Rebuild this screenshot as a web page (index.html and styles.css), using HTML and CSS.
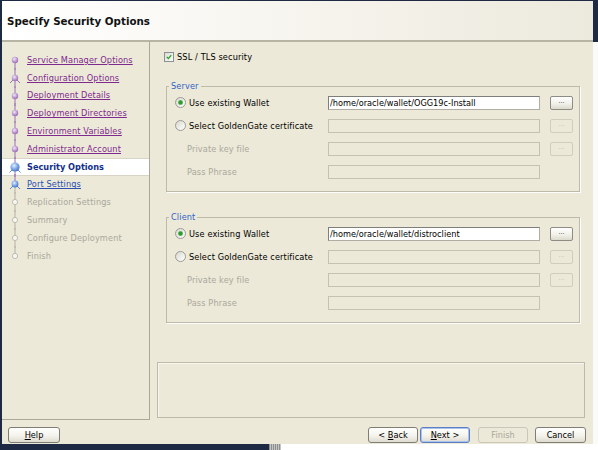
FILE: index.html
```html
<!DOCTYPE html>
<html lang="en">
<head>
  <meta charset="UTF-8">
  <title>Specify Security Options</title>
  <link rel="stylesheet" href="styles.css">
</head>
<body>
  <svg class="defs" width="0" height="0">
    <defs>
      <radialGradient id="gPurple" cx="0.4" cy="0.35" r="0.7">
        <stop offset="0" stop-color="#f1e8f6"/>
        <stop offset="0.5" stop-color="#c3a2d6"/>
        <stop offset="1" stop-color="#9466ad"/>
      </radialGradient>
      <radialGradient id="gBlue" cx="0.4" cy="0.35" r="0.7">
        <stop offset="0" stop-color="#e4eefc"/>
        <stop offset="0.5" stop-color="#86aee8"/>
        <stop offset="1" stop-color="#3b6cc4"/>
      </radialGradient>
    </defs>
  </svg>

  <div class="desk">
    <div class="window">
      <div class="header"><h1>Specify Security Options</h1></div>

      <div class="main">
        <nav class="steps">
          <div class="step visited">
            <svg class="ico" viewBox="0 0 25 18"><line class="ln-p" x1="13" y1="9" x2="13" y2="19"/><circle cx="13" cy="9" r="3.2" fill="url(#gPurple)"/></svg>
            <a>Service Manager Options</a>
          </div>
          <div class="step visited">
            <svg class="ico" viewBox="0 0 25 18"><line class="ln-p" x1="13" y1="-1" x2="13" y2="19"/><path class="ln-p" d="M13 9 L8 14 M13 9 L18 14"/><circle cx="13" cy="9" r="3.2" fill="url(#gPurple)"/></svg>
            <a>Configuration Options</a>
          </div>
          <div class="step visited">
            <svg class="ico" viewBox="0 0 25 18"><line class="ln-p" x1="13" y1="-1" x2="13" y2="19"/><circle cx="13" cy="9" r="3.2" fill="url(#gPurple)"/></svg>
            <a>Deployment Details</a>
          </div>
          <div class="step visited">
            <svg class="ico" viewBox="0 0 25 18"><line class="ln-p" x1="13" y1="-1" x2="13" y2="19"/><circle cx="13" cy="9" r="3.2" fill="url(#gPurple)"/></svg>
            <a>Deployment Directories</a>
          </div>
          <div class="step visited">
            <svg class="ico" viewBox="0 0 25 18"><line class="ln-p" x1="13" y1="-1" x2="13" y2="19"/><circle cx="13" cy="9" r="3.2" fill="url(#gPurple)"/></svg>
            <a>Environment Variables</a>
          </div>
          <div class="step visited">
            <svg class="ico" viewBox="0 0 25 18"><line class="ln-p" x1="13" y1="-1" x2="13" y2="19"/><circle cx="13" cy="9" r="3.2" fill="url(#gPurple)"/></svg>
            <a>Administrator Account</a>
          </div>
          <div class="step current">
            <svg class="ico" viewBox="0 0 25 18"><line class="ln-p" x1="13" y1="-1" x2="13" y2="19"/><path class="ln-b" d="M13 9 L7.5 14.5 M13 9 L18.5 14.5"/><circle cx="13" cy="9" r="4.6" fill="url(#gBlue)"/></svg>
            <span>Security Options</span>
          </div>
          <div class="step next">
            <svg class="ico" viewBox="0 0 25 18"><line class="ln-p" x1="13" y1="-1" x2="13" y2="9"/><line class="ln-g" x1="13" y1="9" x2="13" y2="19"/><path class="ln-b" d="M13 9 L8 14 M13 9 L18 14"/><circle cx="13" cy="9" r="3.4" fill="url(#gBlue)"/></svg>
            <a>Port Settings</a>
          </div>
          <div class="step pending">
            <svg class="ico" viewBox="0 0 25 18"><line class="ln-g" x1="13" y1="-1" x2="13" y2="19"/><circle class="dot-g" cx="13" cy="9" r="2.6"/></svg>
            <span>Replication Settings</span>
          </div>
          <div class="step pending">
            <svg class="ico" viewBox="0 0 25 18"><line class="ln-g" x1="13" y1="-1" x2="13" y2="19"/><circle class="dot-g" cx="13" cy="9" r="2.6"/></svg>
            <span>Summary</span>
          </div>
          <div class="step pending">
            <svg class="ico" viewBox="0 0 25 18"><line class="ln-g" x1="13" y1="-1" x2="13" y2="19"/><circle class="dot-g" cx="13" cy="9" r="2.6"/></svg>
            <span>Configure Deployment</span>
          </div>
          <div class="step pending">
            <svg class="ico" viewBox="0 0 25 18"><line class="ln-g" x1="13" y1="-1" x2="13" y2="9"/><circle class="dot-g" cx="13" cy="9" r="2.6"/></svg>
            <span>Finish</span>
          </div>
        </nav>

        <div class="content">
          <div class="check-row">
            <span class="checkbox"><svg viewBox="0 0 10 10"><path d="M2.2 4.8 L4.2 7 L7.8 2.6" fill="none" stroke="#22a022" stroke-width="1.6"/></svg></span>
            SSL / TLS security
          </div>

          <fieldset class="group">
            <legend>Server</legend>
            <div class="rows">
              <span class="radio on"></span><span>Use existing Wallet</span>
              <input class="field" type="text" value="/home/oracle/wallet/OGG19c-Install" readonly>
              <button class="browse">...</button>

              <span class="radio"></span><span>Select GoldenGate certificate</span>
              <input class="field" type="text" disabled>
              <button class="browse" disabled>...</button>

              <span class="sub">Private key file</span>
              <input class="field" type="text" disabled>
              <button class="browse" disabled>...</button>

              <span class="sub">Pass Phrase</span>
              <input class="field" type="password" disabled>
              <span></span>
            </div>
          </fieldset>

          <fieldset class="group client">
            <legend>Client</legend>
            <div class="rows">
              <span class="radio on"></span><span>Use existing Wallet</span>
              <input class="field" type="text" value="/home/oracle/wallet/distroclient" readonly>
              <button class="browse">...</button>

              <span class="radio"></span><span>Select GoldenGate certificate</span>
              <input class="field" type="text" disabled>
              <button class="browse" disabled>...</button>

              <span class="sub">Private key file</span>
              <input class="field" type="text" disabled>
              <button class="browse" disabled>...</button>

              <span class="sub">Pass Phrase</span>
              <input class="field" type="password" disabled>
              <span></span>
            </div>
          </fieldset>

          <div class="message"></div>
        </div>
      </div>

      <div class="footer">
        <button class="btn help"><u>H</u>elp</button>
        <button class="btn back">&lt; <u>B</u>ack</button>
        <button class="btn next"><u>N</u>ext &gt;</button>
        <button class="btn finish" disabled>Finish</button>
        <button class="btn cancel">Cancel</button>
      </div>
    </div>
    <div class="edge"></div>
  </div>

  <div class="taskbar">
    <span class="tb-dark"></span>
    <span class="tb-grip"></span>
  </div>
</body>
</html>
```

FILE: styles.css
```css
body {
  margin: 0;
  width: 598px;
  height: 450px;
  overflow: hidden;
  background: #fff;
  font-family: "DejaVu Sans", sans-serif;
  font-size: 8.2px;
  letter-spacing: 0.12px;
  color: #000;
}
.defs {
  position: absolute;
  width: 0;
  height: 0;
}
.desk {
  display: flex;
  height: 444px;
}
.window {
  width: 593px;
  box-sizing: border-box;
  border-top: 1px solid #1e2a44;
  border-left: 2px solid #1e2a44;
  background: #ece9d8;
  display: flex;
  flex-direction: column;
}
.edge {
  flex: 1;
  background: linear-gradient(#1e2a44 0 42px, #fafaf8 42px);
}
.header {
  height: 39px;
  border-bottom: 2px solid #b7b4a4;
  background: linear-gradient(to right, #ffffff, #f4f2ea 60%, #eceadd);
  display: flex;
  align-items: center;
  padding-left: 5px;
}
h1 {
  margin: 0;
  font-size: 10.3px;
  font-weight: bold;
  letter-spacing: 0;
  color: #111;
}

.main {
  display: flex;
  height: 378px;
}
.steps {
  width: 148px;
  box-sizing: border-box;
  border-right: 1px solid #aca899;
  border-bottom: 1px solid #aca899;
  padding-top: 9px;
}
.step {
  display: flex;
  align-items: center;
  height: 17.8px;
}
.step .ico {
  width: 25px;
  height: 18px;
  flex: none;
  overflow: visible;
}
.ln-p { stroke: #9a70b2; stroke-width: 1; fill: none; }
.ln-b { stroke: #5a86d0; stroke-width: 1; fill: none; }
.ln-g { stroke: #b3b1a5; stroke-width: 1; }
.dot-g { fill: #f7f6f1; stroke: #b3b1a5; stroke-width: 0.8; }

.step a {
  text-decoration: underline;
}
.visited a {
  color: #7e2a8e;
}
.current {
  background: #fff;
  box-shadow: inset 0 1px 0 #d8d5c8, inset 0 -1px 0 #d8d5c8;
}
.current span {
  font-weight: bold;
  letter-spacing: 0;
  color: #12308a;
}
.next a {
  color: #2a4fb0;
}
.pending span {
  color: #aaa89b;
}

.content {
  flex: 1;
  display: flex;
  flex-direction: column;
}
.check-row {
  display: flex;
  align-items: center;
  gap: 3px;
  height: 10px;
  margin: 10px 0 0 14px;
}
.checkbox {
  width: 10px;
  height: 10px;
  box-sizing: border-box;
  border: 1px solid #8a9096;
  background: linear-gradient(135deg, #dcdcd4, #fbfbf8);
  display: flex;
}
.checkbox svg {
  width: 8px;
  height: 8px;
}

.group {
  margin: 19px 0 0 16px;
  padding: 0;
  width: 414px;
  box-sizing: border-box;
  border: 1px solid #bdbaa9;
  box-shadow: 1px 1px 0 #fdfdfb;
  min-width: 0;
}
.group.client {
  margin-top: 20px;
}
.group legend {
  padding: 0 2px;
  margin-left: 2px;
  line-height: 10px;
  color: #2f63c9;
}
.rows {
  display: grid;
  grid-template-columns: 14px 139px 212px 33px;
  grid-auto-rows: 23px;
  align-items: center;
  padding: 0 5px 8px 8px;
}
.radio {
  width: 11px;
  height: 11px;
  box-sizing: border-box;
  border-radius: 50%;
  border: 1px solid #9b9b94;
  background: linear-gradient(135deg, #d8d8d0, #ffffff);
}
.radio.on {
  background: radial-gradient(circle, #2f9a2f 0 1.6px, #8fd08f 2.4px, transparent 3px),
              linear-gradient(135deg, #d8d8d0, #ffffff);
}
.sub {
  grid-column: 1 / 3;
  padding-left: 12px;
  color: #aaa89b;
}
.field {
  height: 14px;
  width: 212px;
  box-sizing: border-box;
  margin: 0;
  padding: 0 1px;
  border: 1px solid #c5c2b1;
  background: #ece9d8;
  font: inherit;
  color: #000;
  outline: none;
}
.field[readonly] {
  background: #fff;
  border-color: #7e7e7a;
  border-bottom-color: #b0aea4;
  border-right-color: #b0aea4;
}
.browse {
  justify-self: end;
  width: 23px;
  height: 14px;
  box-sizing: border-box;
  margin: 0;
  padding: 0 0 3px;
  border: 1px solid #8e8c84;
  border-radius: 2px;
  background: linear-gradient(#ffffff, #f0efe7 60%, #dcdacd);
  font-family: inherit;
  font-size: 6.5px;
  color: #333;
}
.browse:disabled {
  border-color: #d0cdbe;
  background: #ece9d8;
  color: #c5c2b2;
}

.message {
  margin: auto 8px 2px 7px;
  height: 56px;
  box-sizing: border-box;
  border: 1px solid #bdbaa9;
  box-shadow: inset 1px 1px 0 #f7f6f0;
}

.footer {
  height: 24px;
  box-sizing: border-box;
  display: flex;
  align-items: flex-start;
  padding: 7px 7px 0 6px;
}
.btn {
  width: 50px;
  height: 16px;
  box-sizing: border-box;
  margin: 0;
  padding: 0;
  border: 1px solid #7f7d76;
  border-radius: 3px;
  background: linear-gradient(#ffffff, #f4f3ec 55%, #dedcd0);
  font: inherit;
  color: #000;
}
.btn.help {
  width: 52px;
}
.btn.back {
  margin-left: auto;
}
.btn.next {
  margin-left: 2px;
  border-color: #5d7fc4;
  box-shadow: inset 0 0 0 1px #a9c1ec;
}
.btn.finish {
  margin-left: 8px;
  border-color: #c9c7ba;
  background: #ece9d8;
  color: #aaa89b;
}
.btn.cancel {
  margin-left: 7px;
  width: 51px;
}

.taskbar {
  display: flex;
  height: 6px;
}
.tb-dark {
  width: 269px;
  background: #1e2a44;
}
.tb-grip {
  width: 12px;
  background: repeating-linear-gradient(90deg, #8e8e8e 0 1px, #c4c4c4 1px 2px);
}
```
